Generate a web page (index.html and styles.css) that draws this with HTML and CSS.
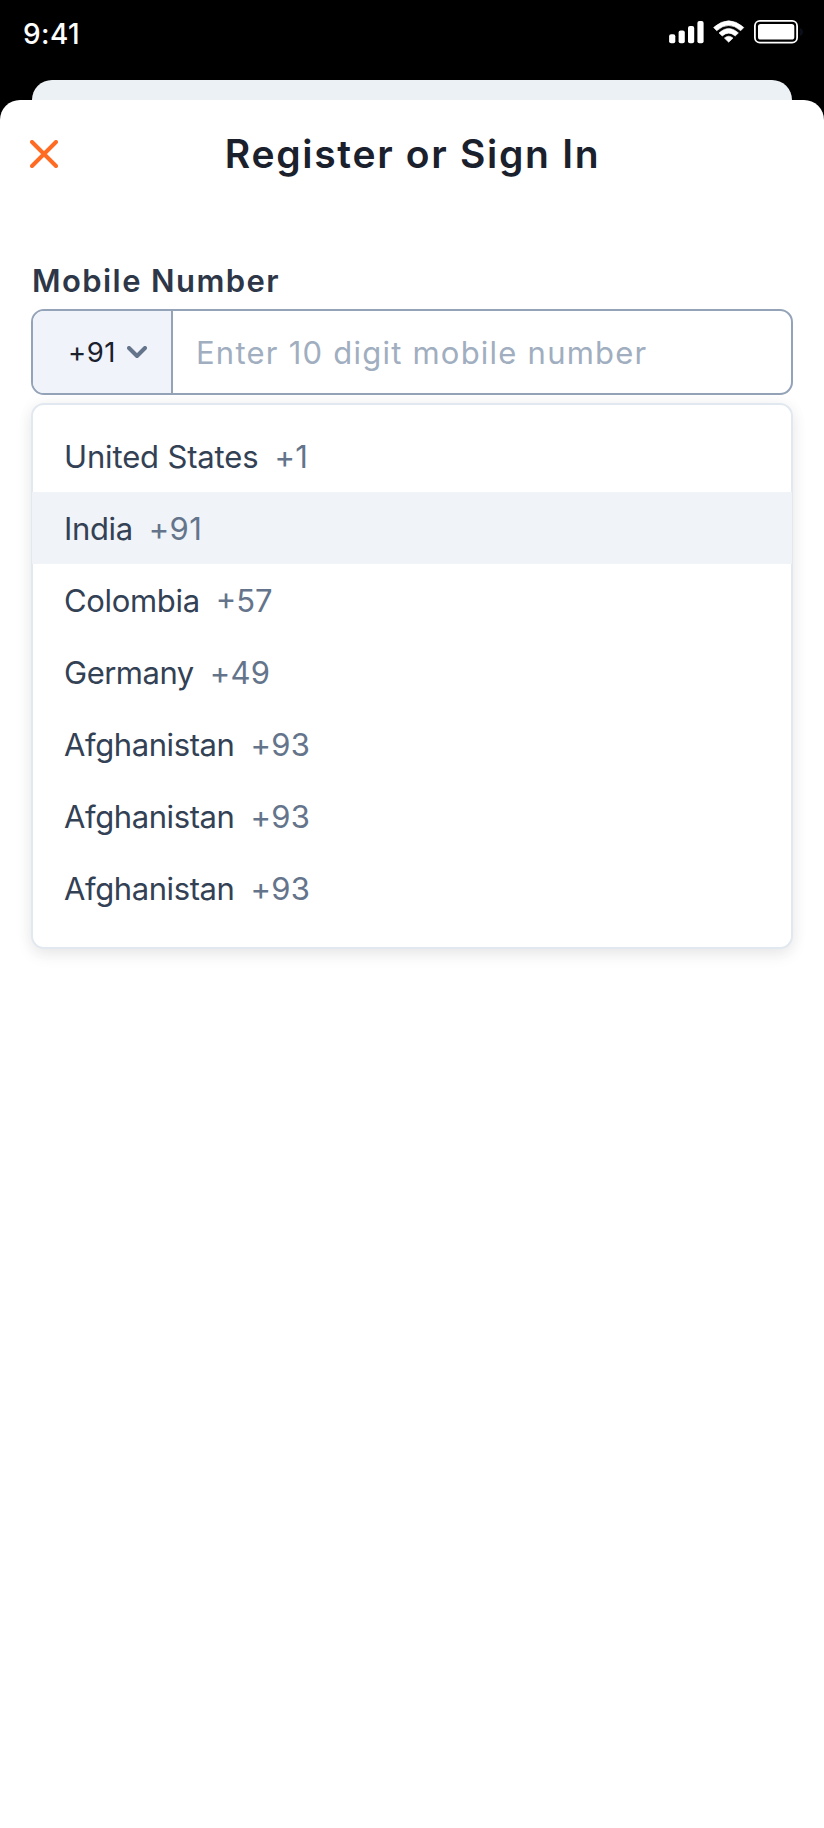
FILE: index.html
```html
<!DOCTYPE html>
<html lang="en">
<head>
<meta charset="utf-8">
<title>Register or Sign In</title>
<link rel="stylesheet" href="styles.css">
</head>
<body>
<div class="screen">
  <header class="status">
    <span class="time">9:41</span>
    <svg class="status-icons" width="136" height="26" viewBox="668 19 136 26" fill="#fff">
      <rect x="669.1" y="34.2" width="6.2" height="9" rx="2"/>
      <rect x="678.6" y="30.4" width="6.2" height="12.8" rx="2"/>
      <rect x="688" y="26" width="6.2" height="17.2" rx="2"/>
      <rect x="697.4" y="21" width="6.2" height="22.2" rx="2"/>
      <path d="M713.6 27.5Q728.7 14 743.8 27.5L740.7 30.7Q728.7 20.3 716.7 30.7Z" stroke="#fff" stroke-width=".6" stroke-linejoin="round"/>
      <path d="M719 32.9Q728.7 23.9 738.4 32.9L735.2 36Q728.7 30.3 722.2 36Z" stroke="#fff" stroke-width=".6" stroke-linejoin="round"/>
      <path d="M724.4 38.1Q728.7 34.3 733 38.1L728.7 42.2Z" stroke="#fff" stroke-width=".6" stroke-linejoin="round"/>
      <rect x="754.9" y="20.9" width="42.2" height="21.8" rx="5" fill="none" stroke="#fff" stroke-width="1.8"/>
      <rect x="758" y="24" width="36.3" height="15.6" rx="2.6"/>
      <path d="M800 28v8q3-1.200 3-4t-3-4Z" fill="#0a0e18"/>
    </svg>
  </header>
  <div class="back-card"></div>
  <main class="sheet">
    <div class="title-bar">
      <svg class="close" width="28" height="28" viewBox="0 0 28 28" fill="none" stroke="#ff6b22" stroke-width="4" stroke-linecap="round"><path d="M2 2L26 26M26 2L2 26"/></svg>
      <h1 class="title">Register or Sign In</h1>
    </div>
    <section class="form">
      <label class="label">Mobile Number</label>
      <div class="field">
        <div class="prefix">
          <span>+91</span>
          <svg width="20" height="13" viewBox="0 0 20 13" fill="none" stroke="#64748b" stroke-width="4" stroke-linecap="round" stroke-linejoin="round"><path d="M2 2L10 10L18 2"/></svg>
        </div>
        <div class="placeholder">Enter 10 digit mobile number</div>
      </div>
      <ul class="menu">
        <li class="option"><span class="name">United States</span><span class="code">+1</span></li>
        <li class="option selected"><span class="name india">India</span><span class="code">+91</span></li>
        <li class="option"><span class="name colombia">Colombia</span><span class="code tight">+57</span></li>
        <li class="option"><span class="name germany">Germany</span><span class="code">+49</span></li>
        <li class="option"><span class="name afghanistan">Afghanistan</span><span class="code">+93</span></li>
        <li class="option"><span class="name afghanistan">Afghanistan</span><span class="code">+93</span></li>
        <li class="option"><span class="name afghanistan">Afghanistan</span><span class="code">+93</span></li>
      </ul>
    </section>
  </main>
</div>
</body>
</html>
```

FILE: styles.css
```css
* { box-sizing: border-box; }
body { margin: 0; background: #000; font-family: "Inter", "Liberation Sans", sans-serif; }
.screen { width: 824px; height: 1828px; display: flex; flex-direction: column; background: #000; overflow: hidden; }
.status { height: 80px; flex: none; display: flex; justify-content: space-between; padding: 19px 20px 0 23px; }
.time { color: #fff; font-size: 28px; font-weight: 500; line-height: 31px; letter-spacing: .4px; }
.status-icons { display: block; }
.back-card { height: 20px; flex: none; margin: 0 32px; background: #ebf1f5; border-radius: 20px 20px 0 0; }
.sheet { flex: 1; background: #fff; border-radius: 20px 20px 0 0; }
.title-bar { height: 108px; display: grid; grid-template-columns: 28px 1fr 28px; align-items: center; padding: 0 30px; }
.close { display: block; }
.title { margin: 0; padding-left: 1px; text-align: center; color: #1a202c; font-size: 39px; font-weight: 600; line-height: 48px; letter-spacing: 1.7px; white-space: nowrap; }
.form { padding: 53px 31px 0; }
.label { display: block; height: 48px; padding-left: 1px; color: #2d3748; font-size: 31px; font-weight: 600; line-height: 39px; letter-spacing: 1.42px; }
.field { height: 86px; display: flex; border: 2px solid #94a3b8; border-radius: 13px; overflow: hidden; background: #fff; }
.prefix { width: 140px; flex: none; display: flex; align-items: center; gap: 11px; padding-left: 35px; background: #f0f3f9; border-right: 2px solid #94a3b8; color: #1a202c; font-size: 27.5px; letter-spacing: .5px; }
.placeholder { padding-left: 23px; color: #a0aec0; font-size: 31px; line-height: 84px; letter-spacing: 1.23px; white-space: nowrap; }
.menu { list-style: none; height: 546px; margin: 8px 0 0; padding: 15px 0; border: 2px solid #e2e8f0; border-radius: 13px; background: #fff; box-shadow: 0 6px 16px rgba(0,0,0,.08), 0 0 18px rgba(0,0,0,.04); }
.option { height: 72px; margin: 0 -1px; padding-left: 32px; display: flex; align-items: center; gap: 16px; font-size: 31px; }
.selected { background: #f0f3f8; }
.name { color: #334155; letter-spacing: -.15px; }
.india { letter-spacing: -.35px; }
.colombia { letter-spacing: -.33px; }
.germany { letter-spacing: -.5px; }
.afghanistan { letter-spacing: -.4px; }
.code { color: #64748b; letter-spacing: .3px; }
.tight { letter-spacing: 0; }
```
